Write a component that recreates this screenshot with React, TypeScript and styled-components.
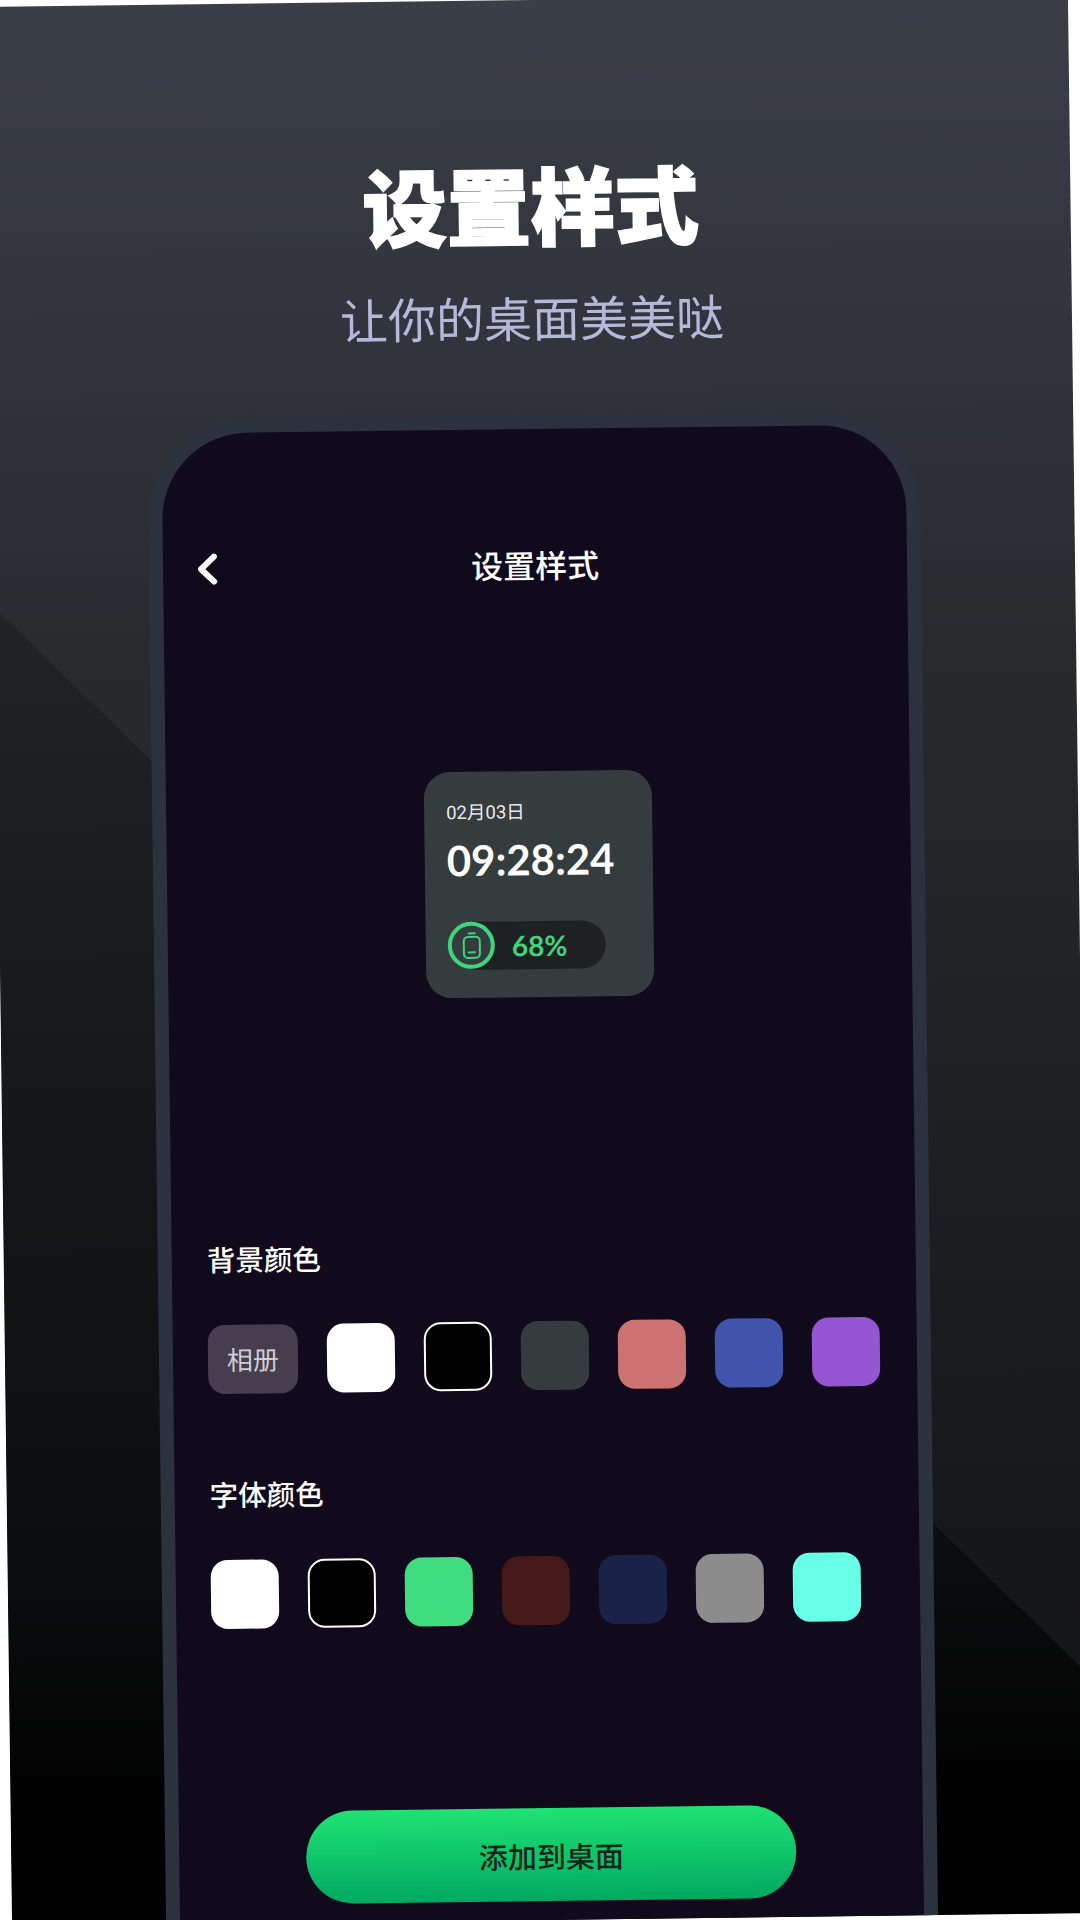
import React from 'react'
import styled, { createGlobalStyle } from 'styled-components'

const cjk = '"Noto Sans CJK SC", "Noto Sans", sans-serif'
const latin = 'Lato, "Noto Sans CJK SC", sans-serif'

const GlobalStyle = createGlobalStyle`
  html, body {
    margin: 0;
    padding: 0;
    width: 1080px;
    height: 1920px;
    overflow: hidden;
    background: #fff;
  }
  * {
    box-sizing: border-box;
  }
`

const Poster = styled.div`
  position: relative;
  width: 1080px;
  height: 1920px;
  overflow: hidden;
  display: flex;
  flex-direction: column;
  align-items: center;
  transform: rotate(-0.72deg);
  font-family: ${cjk};
  background: linear-gradient(
    180deg,
    #3a3e48 0,
    #32353d 300px,
    #292a2e 650px,
    #1f2023 1100px,
    #17181a 1500px,
    #101011 1920px
  );

  &::before {
    content: '';
    position: absolute;
    inset: 0;
    clip-path: polygon(0 602px, 100% 1682px, 100% 100%, 0 100%);
    background: linear-gradient(
      180deg,
      #212327 600px,
      #16181b 1050px,
      #0b0c0d 1580px,
      #000 1820px
    );
  }
`

const Title = styled.h1`
  position: relative;
  margin: 143px 0 0;
  font-size: 84px;
  line-height: 120px;
  font-weight: 900;
  color: #fff;
  -webkit-text-stroke: 2px #fff;
`

const Subtitle = styled.p`
  position: relative;
  margin: 19px 0 0;
  font-size: 48px;
  line-height: 68px;
  font-weight: 400;
  color: #b4b9d9;
`

const Phone = styled.div`
  position: relative;
  flex: none;
  margin-top: 65px;
  width: 772px;
  height: 1700px;
  border: 14px solid #2b323d;
  border-radius: 100px;
  background: #110a1c;
  display: flex;
  flex-direction: column;
  align-items: center;
`

const NavBar = styled.div`
  margin-top: 116px;
  width: 100%;
  height: 40px;
  padding: 0 33px;
  display: grid;
  grid-template-columns: 1fr auto 1fr;
  align-items: center;
`

const BackIcon = styled.svg`
  display: block;
  width: 22px;
  height: 32px;
`

const NavTitle = styled.div`
  font-size: 32px;
  line-height: 40px;
  font-weight: 500;
  margin-top: -2px;
  color: #fff;
`

const Widget = styled.div`
  margin-top: 186px;
  width: 228px;
  height: 226px;
  padding: 28px 0 0 22px;
  border-radius: 26px;
  background: #353c3d;
`

const DateText = styled.div`
  font-family: Roboto, "Noto Sans CJK SC", sans-serif;
  font-size: 18.5px;
  line-height: 26px;
  color: #ebebeb;
`

const TimeText = styled.div`
  margin-top: 8px;
  font-family: ${latin};
  font-size: 42px;
  line-height: 52px;
  font-weight: 700;
  color: #fff;
`

const BatteryPill = styled.div`
  position: relative;
  margin-top: 36px;
  width: 158px;
  height: 48px;
  padding-left: 64px;
  display: flex;
  align-items: center;
  &::before {
    content: '';
    position: absolute;
    top: 0;
    bottom: 0;
    left: 24px;
    right: 0;
    border-radius: 0 24px 24px 0;
    background: #1e2123;
  }
`

const BatteryRing = styled.div`
  position: absolute;
  left: 0;
  top: 0;
  width: 47px;
  height: 47px;
  border: 4px solid #40d47e;
  border-radius: 50%;
  background: #353c3d;
  display: flex;
  align-items: center;
  justify-content: center;
`

const BatteryIcon = styled.svg`
  display: block;
  width: 20px;
  height: 28px;
`

const BatteryLevel = styled.span`
  position: relative;
  font-family: ${latin};
  font-size: 28px;
  font-weight: 700;
  color: #40d47e;
`

const Section = styled.section<{ $top: number }>`
  align-self: stretch;
  margin-top: ${({ $top }) => $top}px;
  padding-left: 35px;
`

const SectionLabel = styled.div`
  font-size: 28.5px;
  line-height: 28px;
  font-weight: 500;
  color: #fff;
`

const SwatchRow = styled.div`
  margin-top: 52px;
  display: flex;
  gap: 29px;
`

const Swatch = styled.div<{ $color: string; $outlined?: boolean }>`
  flex: none;
  width: 68px;
  height: 69px;
  border-radius: 17px;
  background: ${({ $color }) => $color};
  border: ${({ $outlined }) => ($outlined ? '2px solid #fff' : 'none')};
`

const AlbumTile = styled.div`
  flex: none;
  width: 90px;
  height: 69px;
  padding-bottom: 3px;
  border-radius: 17px;
  background: #463e4e;
  color: #cfcdd3;
  font-size: 26px;
  display: flex;
  align-items: center;
  justify-content: center;
`

const AddButton = styled.button`
  margin-top: 183px;
  width: 490px;
  height: 93px;
  border: none;
  border-radius: 47px;
  background: linear-gradient(180deg, #20e273 0%, #00a962 100%);
  color: #0b2519;
  font-family: ${cjk};
  font-size: 29px;
  font-weight: 500;
`

const backgroundColors = ['#ffffff', '#000000', '#353c3d', '#cd7272', '#4054ae', '#9655d2']
const fontColors = ['#ffffff', '#000000', '#40dc80', '#451819', '#1a224a', '#8c8c8c', '#68ffe8']

const App = () => (
  <>
    <GlobalStyle />
    <Poster>
      <Title>设置样式</Title>
      <Subtitle>让你的桌面美美哒</Subtitle>
      <Phone>
        <NavBar>
          <BackIcon viewBox="0 0 22 32" fill="none">
            <path
              d="M18 3.5 5 16l13 12.5"
              stroke="#fff"
              strokeWidth="6"
              strokeLinecap="round"
              strokeLinejoin="round"
            />
          </BackIcon>
          <NavTitle>设置样式</NavTitle>
        </NavBar>
        <Widget>
          <DateText>02月03日</DateText>
          <TimeText>09:28:24</TimeText>
          <BatteryPill>
            <BatteryRing>
              <BatteryIcon viewBox="0 0 20 28" fill="none" stroke="#40d47e" strokeWidth="2">
                <rect x="2" y="5" width="16" height="21" rx="4" />
                <path d="M7 1.5h6M7 20.5h6" strokeLinecap="round" />
              </BatteryIcon>
            </BatteryRing>
            <BatteryLevel>68%</BatteryLevel>
          </BatteryPill>
        </Widget>
        <Section $top={244}>
          <SectionLabel>背景颜色</SectionLabel>
          <SwatchRow>
            <AlbumTile>相册</AlbumTile>
            {backgroundColors.map((color) => (
              <Swatch key={color} $color={color} $outlined={color === '#000000'} />
            ))}
          </SwatchRow>
        </Section>
        <Section $top={86}>
          <SectionLabel>字体颜色</SectionLabel>
          <SwatchRow>
            {fontColors.map((color) => (
              <Swatch key={color} $color={color} $outlined={color === '#000000'} />
            ))}
          </SwatchRow>
        </Section>
        <AddButton>添加到桌面</AddButton>
      </Phone>
    </Poster>
  </>
)

export default App
